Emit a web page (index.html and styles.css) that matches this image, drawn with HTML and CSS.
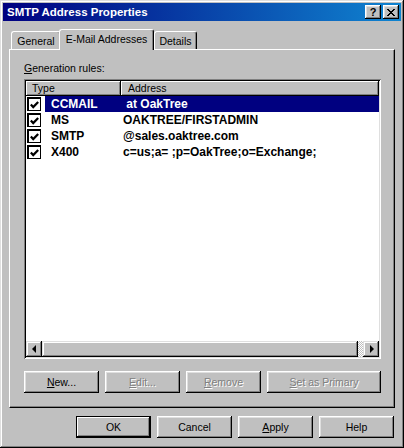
FILE: index.html
```html
<!DOCTYPE html>
<html>
<head>
<meta charset="utf-8">
<link rel="stylesheet" href="styles.css">
</head>
<body>
<div class="window">
  <div class="titlebar">
    <span class="title">SMTP Address Properties</span>
    <span class="tbtn help-q">?</span>
    <span class="tbtn"><svg width="8" height="7" viewBox="0 0 8 7"><path d="M0 0h2v1h1v1h2V1h1V0h2v1H7v1H6v1H5v1h1v1h1v1h1v1H6V6H5V5H3v1H2v1H0V6h1V5h1V4h1V3H2V2H1V1H0z" fill="#000"/></svg></span>
  </div>
  <div class="content">
    <div class="tabs">
      <div class="tab tab-general">General</div>
      <div class="tab tab-active">E-Mail Addresses</div>
      <div class="tab tab-details">Details</div>
    </div>
    <div class="panel">
      <div class="label"><u>G</u>eneration rules:</div>
      <div class="list">
        <div class="header">
          <div class="hcell hcell-type">Type</div>
          <div class="hcell hcell-addr">Address</div>
        </div>
        <div class="rows">
          <div class="row">
            <div class="ck"><span class="box"><svg width="12" height="12" viewBox="0 0 12 12"><path d="M2 5.5 L4.6 8.3 L10 2.6" stroke="#000" stroke-width="2.4" fill="none"/></svg></span></div>
            <div class="cells selected"><span class="c-type">CCMAIL</span><span class="c-addr"> at OakTree</span></div>
          </div>
          <div class="row">
            <div class="ck"><span class="box"><svg width="12" height="12" viewBox="0 0 12 12"><path d="M2 5.5 L4.6 8.3 L10 2.6" stroke="#000" stroke-width="2.4" fill="none"/></svg></span></div>
            <div class="cells"><span class="c-type">MS</span><span class="c-addr">OAKTREE/FIRSTADMIN</span></div>
          </div>
          <div class="row">
            <div class="ck"><span class="box"><svg width="12" height="12" viewBox="0 0 12 12"><path d="M2 5.5 L4.6 8.3 L10 2.6" stroke="#000" stroke-width="2.4" fill="none"/></svg></span></div>
            <div class="cells"><span class="c-type">SMTP</span><span class="c-addr">@sales.oaktree.com</span></div>
          </div>
          <div class="row">
            <div class="ck"><span class="box"><svg width="12" height="12" viewBox="0 0 12 12"><path d="M2 5.5 L4.6 8.3 L10 2.6" stroke="#000" stroke-width="2.4" fill="none"/></svg></span></div>
            <div class="cells"><span class="c-type">X400</span><span class="c-addr">c=us;a= ;p=OakTree;o=Exchange;</span></div>
          </div>
        </div>
        <div class="scrollbar">
          <div class="arr"><span class="tri-left"></span></div>
          <div class="track"><div class="thumb"></div></div>
          <div class="arr"><span class="tri-right"></span></div>
        </div>
      </div>
      <div class="actions">
        <div class="btn w75"><u>N</u>ew...</div>
        <div class="btn w75 disabled"><u>E</u>dit...</div>
        <div class="btn w75 disabled"><u>R</u>emove</div>
        <div class="btn w114 disabled"><u>S</u>et as Primary</div>
      </div>
    </div>
    <div class="footer">
      <div class="btn w75 default">OK</div>
      <div class="btn w75">Cancel</div>
      <div class="btn w75"><u>A</u>pply</div>
      <div class="btn w75">Help</div>
    </div>
  </div>
</div>
</body>
</html>
```
FILE: styles.css
```css
* { box-sizing: border-box; margin: 0; padding: 0; }
html, body { width: 404px; height: 448px; overflow: hidden; background: #c0c0c0; }
body { font-family: "Liberation Sans", Arial, sans-serif; font-size: 10.5px; color: #000; }
u { text-decoration: underline; text-underline-offset: 1px; }

.window {
  width: 404px; height: 448px; padding: 3px; background: #c0c0c0;
  box-shadow: inset -1px -1px #000, inset 1px 1px #dfdfdf, inset -2px -2px #808080, inset 2px 2px #fff;
  display: flex; flex-direction: column;
}
.titlebar {
  height: 18px; background: linear-gradient(90deg, #000080, #1084d0);
  display: flex; align-items: center; padding: 0 2px 0 4px;
}
.title { flex: 1; color: #fff; font-weight: bold; font-size: 11.5px; line-height: 18px; }
.tbtn {
  width: 16px; height: 14px; background: #c0c0c0;
  box-shadow: inset -1px -1px #000, inset 1px 1px #fff, inset -2px -2px #808080, inset 2px 2px #dfdfdf;
  display: flex; align-items: center; justify-content: center;
}
.help-q { font-weight: bold; font-size: 11px; line-height: 14px; }
.tbtn + .tbtn { margin-left: 2px; }

.content { padding: 8px 6px 0 6px; display: flex; flex-direction: column; }
.tabs { display: flex; align-items: flex-end; height: 20px; padding-left: 2px; }
.tab {
  height: 18px; display: flex; align-items: center; justify-content: center;
  background: #c0c0c0; border-top: 1px solid #fff; border-left: 1px solid #fff; border-right: 1px solid #000;
  border-radius: 3px 3px 0 0; box-shadow: inset -1px 0 #808080;
}
.tab-general { width: 50px; }
.tab-active { width: 95px; height: 21px; margin-bottom: -1px; margin-left: -2px; position: relative; z-index: 1; padding-bottom: 2px; }
.tab-details { width: 43px; }

.panel {
  height: 359px; border-top: 1px solid #fff; border-left: 1px solid #fff;
  border-right: 1px solid #000; border-bottom: 1px solid #000;
  box-shadow: inset -1px -1px #808080;
  padding: 12px 0 14px 14px;
}
.label { line-height: 13px; height: 13px; margin-bottom: 4px; }
.list {
  width: 357px; height: 280px; padding: 2px; background: #fff;
  box-shadow: inset 1px 1px #808080, inset -1px -1px #fff, inset 2px 2px #000, inset -2px -2px #dfdfdf;
  display: flex; flex-direction: column;
}
.header { display: flex; height: 15px; }
.hcell {
  background: #c0c0c0; line-height: 15px; padding-left: 6px;
  box-shadow: inset -1px -1px #000, inset 1px 1px #fff, inset -2px -2px #808080;
}
.hcell-type { width: 95px; }
.hcell-addr { flex: 1; padding-left: 7px; }
.rows { flex: 1; }
.row { display: flex; height: 16px; align-items: center; }
.ck { width: 19px; padding-left: 1px; display: flex; align-items: center; }
.box {
  width: 14px; height: 14px; background: #fff; border: 1px solid #000;
  box-shadow: inset 1px 1px #000; display: flex; align-items: center; justify-content: center;
  padding: 1px 0 0 1px;
}
.cells {
  flex: 1; height: 16px; display: flex; align-items: center;
  font-size: 12px; font-weight: bold; white-space: pre; line-height: 16px;
}
.cells.selected { background: #000080; color: #fff; }
.c-type { width: 76px; padding-left: 6px; }
.c-addr { padding-left: 2px; }

.scrollbar { height: 16px; display: flex; }
.arr {
  width: 16px; height: 16px; background: #c0c0c0;
  box-shadow: inset -1px -1px #000, inset 1px 1px #dfdfdf, inset -2px -2px #808080, inset 2px 2px #fff;
  display: flex; align-items: center; justify-content: center;
}
.tri-left { width: 0; height: 0; border-top: 4px solid transparent; border-bottom: 4px solid transparent; border-right: 4px solid #000; margin-left: -1px; }
.tri-right { width: 0; height: 0; border-top: 4px solid transparent; border-bottom: 4px solid transparent; border-left: 4px solid #000; margin-left: 1px; }
.track {
  flex: 1; display: flex;
  background: repeating-conic-gradient(#c0c0c0 0 25%, #fff 0 50%) 0 0 / 2px 2px;
}
.thumb {
  width: calc(100% - 5px); height: 16px; background: #c0c0c0;
  box-shadow: inset -1px -1px #000, inset 1px 1px #dfdfdf, inset -2px -2px #808080, inset 2px 2px #fff;
}

.actions { display: flex; gap: 6px; margin-top: 12px; }
.btn {
  height: 22px; background: #c0c0c0; display: flex; align-items: center; justify-content: center;
  box-shadow: inset -1px -1px #000, inset 1px 1px #fff, inset -2px -2px #808080, inset 2px 2px #dfdfdf;
}
.w75 { width: 75px; }
.w114 { width: 114px; }
.btn.disabled { color: #808080; text-shadow: 1px 1px 0 #fff; }
.btn.default {
  box-shadow: inset 0 0 0 1px #000, inset -2px -2px #000, inset 2px 2px #fff, inset -3px -3px #808080;
}
.footer { display: flex; justify-content: flex-end; gap: 6px; margin-top: 8px; padding-right: 1px; }
```
